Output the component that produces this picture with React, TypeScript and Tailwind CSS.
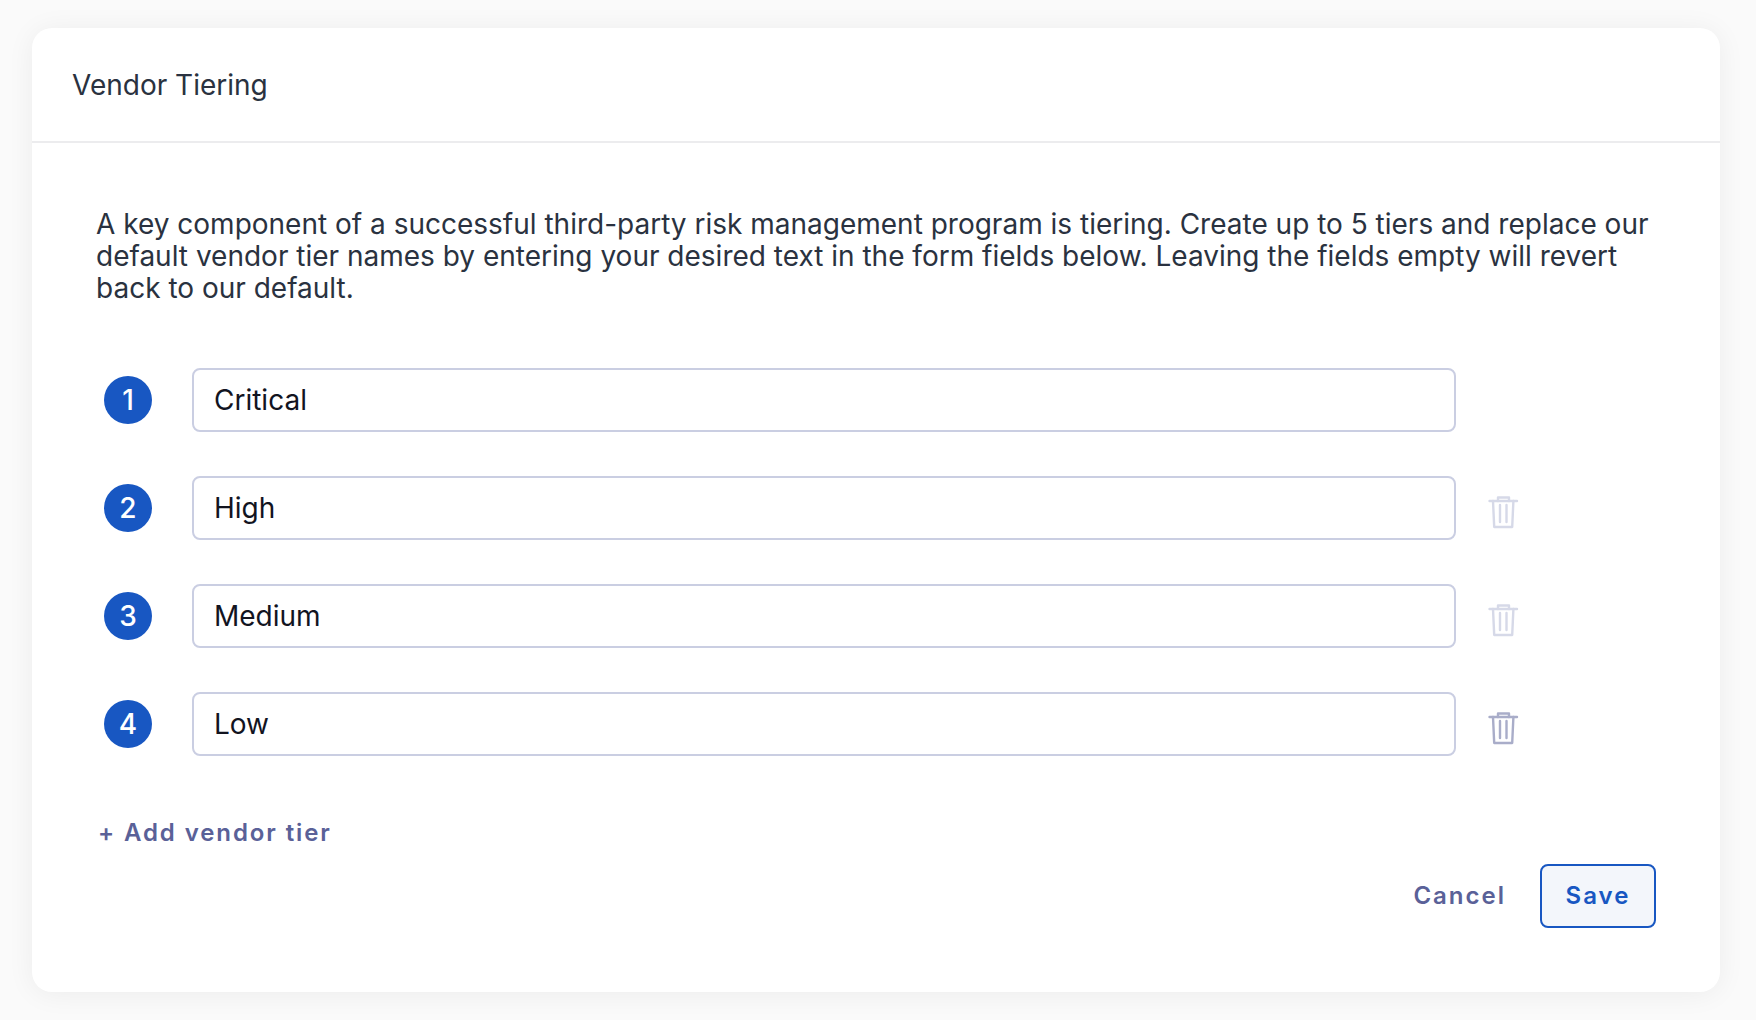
const tiers = [
  { id: 1, name: 'Critical', trash: null },
  { id: 2, name: 'High', trash: 'text-[#d6d9e8]' },
  { id: 3, name: 'Medium', trash: 'text-[#d6d9e8]' },
  { id: 4, name: 'Low', trash: 'text-[#a9adc9]' },
];

function TrashIcon({ className }: { className: string }) {
  return (
    <svg viewBox="0 0 32 34" fill="none" stroke="currentColor" strokeWidth="2.4" strokeLinecap="round" strokeLinejoin="round" className={className}>
      <path d="M1.5 6h27.5" />
      <path d="M10 6V2.5h11V6" />
      <path d="M5 6l1.2 26h18l1.2-26" />
      <path d="M12 10v17M18.5 10v17" />
    </svg>
  );
}

export default function App() {
  return (
    <div className="min-h-[1020px] bg-[#fafafa] pl-8 pr-9 pt-7 font-['Inter',sans-serif]">
      <div className="h-[964px] rounded-[20px] bg-white shadow-[0_2px_28px_rgba(0,0,0,0.06)]">
        <div className="flex h-[115px] items-center border-b-2 border-[#ececee] pl-10">
          <h1 className="text-[28px] font-normal text-[#2a3240]">Vendor Tiering</h1>
        </div>
        <div className="pl-16 pr-16 pt-[65px]">
          <p className="w-[1570px] text-[28px] leading-[32px] text-[#2a3240]">
            A key component of a successful third-party risk management program is tiering. Create up to 5 tiers and replace our default vendor tier names by entering your desired text in the form fields below. Leaving the fields empty will revert back to our default.
          </p>
          <div className="mt-[64px] flex flex-col gap-[44px] pl-2">
            {tiers.map((tier) => (
              <div key={tier.id} className="flex items-center">
                <div className="flex h-12 w-12 items-center justify-center rounded-full bg-[#1857c2] text-[28px] font-medium text-white">
                  {tier.id}
                </div>
                <div className="ml-10 flex h-16 w-[1264px] items-center rounded-lg border-2 border-[#cacee2] pl-[20px] text-[28px] text-[#12141f]">
                  {tier.name}
                </div>
                {tier.trash && <TrashIcon className={`ml-8 mt-2 h-[34px] w-8 ${tier.trash}`} />}
              </div>
            ))}
          </div>
          <div className="mt-[59px] pl-[2px] text-[24px] font-semibold tracking-[1.9px] text-[#5a6198]">+ Add vendor tier</div>
          <div className="mt-[13px] flex items-center justify-end">
            <span className="text-[24px] font-semibold tracking-[2px] text-[#5a6198]">Cancel</span>
            <div className="ml-[34px] flex h-16 w-[116px] items-center justify-center rounded-lg border-2 border-[#1857c2] bg-[#f3f6fb] text-[24px] font-semibold tracking-[2px] text-[#1857c2]">
              Save
            </div>
          </div>
        </div>
      </div>
    </div>
  );
}
